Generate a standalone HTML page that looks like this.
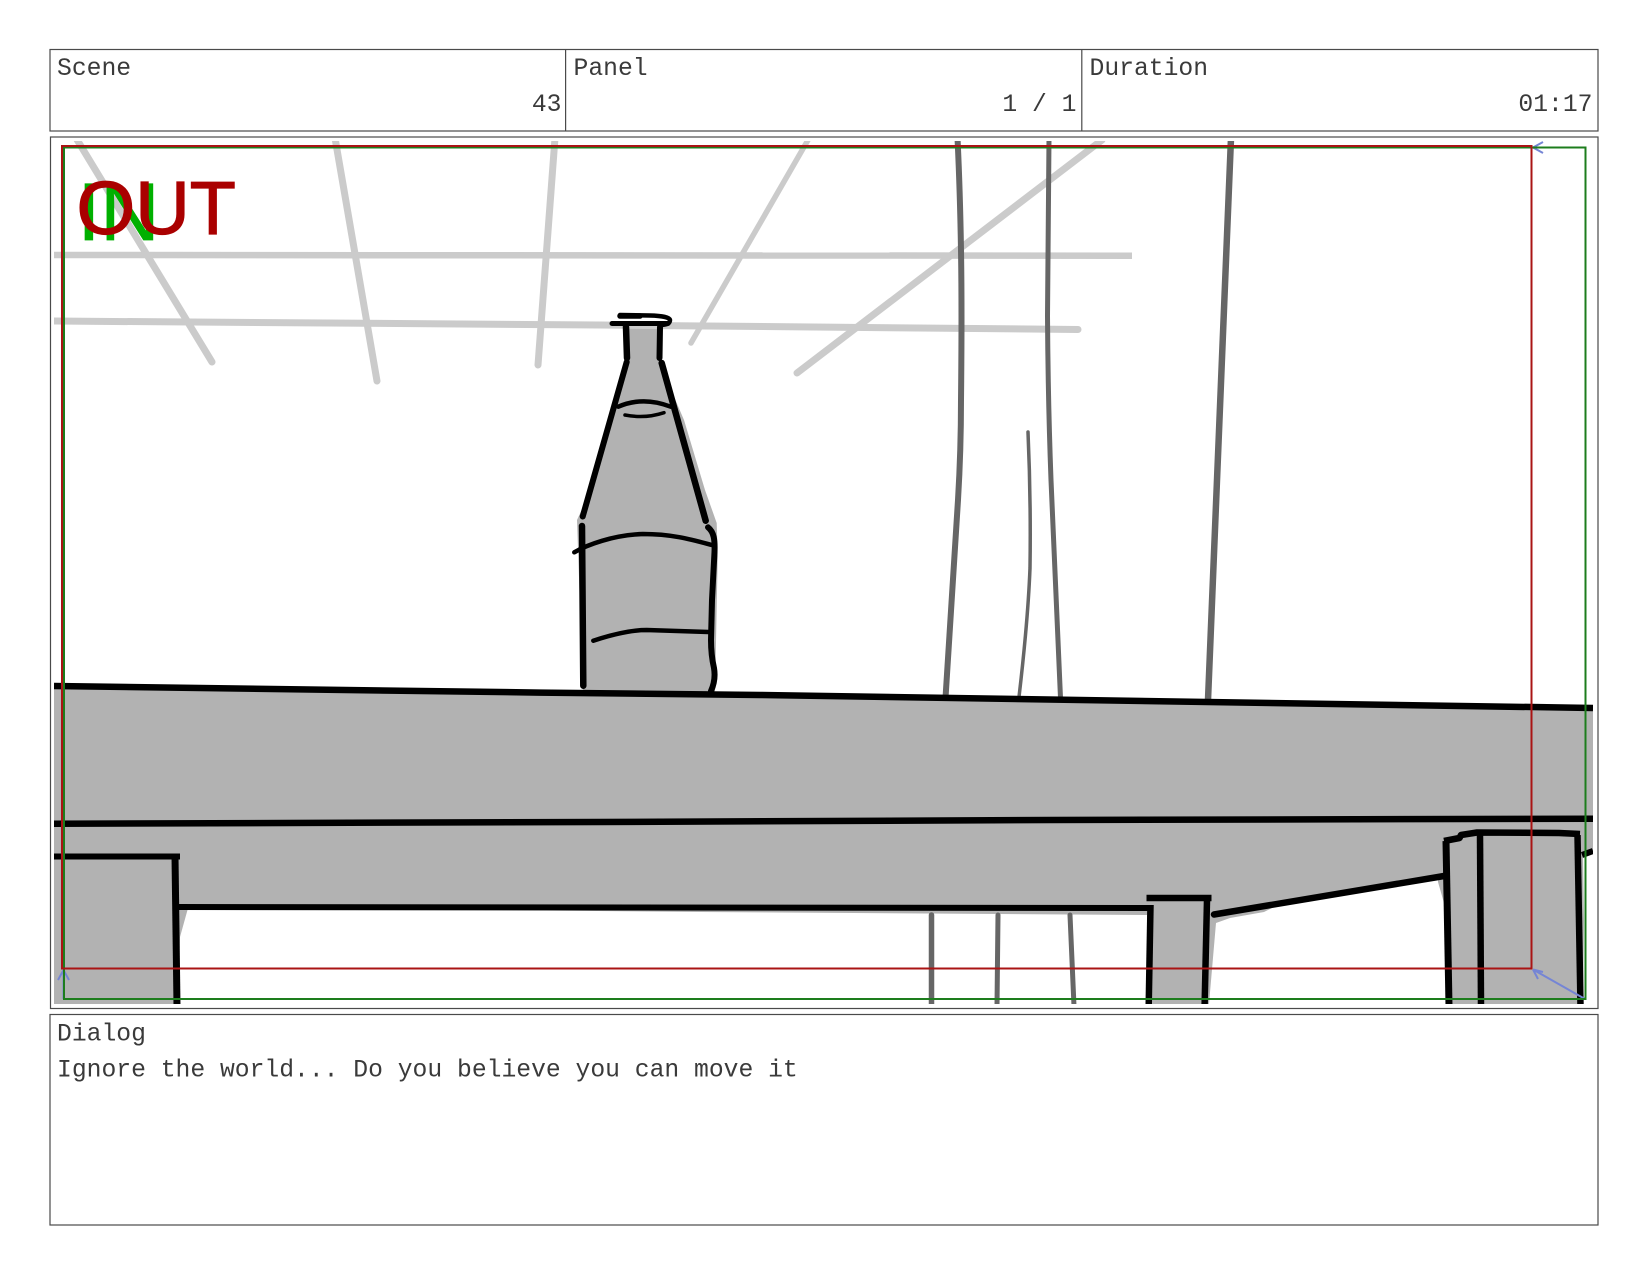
<!DOCTYPE html>
<html lang="en">
<head>
<meta charset="utf-8">
<title>Storyboard</title>
<style>
html,body{margin:0;padding:0;background:#fff;width:1650px;height:1275px;overflow:hidden}
svg{display:block}
.m{font-family:"Liberation Mono",monospace;font-size:24.7px;fill:#3a3a3a}
.e{text-anchor:end}
</style>
</head>
<body>
<svg width="1650" height="1275" viewBox="0 0 1650 1275" xmlns="http://www.w3.org/2000/svg">
<defs><clipPath id="c"><rect x="54" y="141" width="1539" height="863"/></clipPath></defs>

<!-- header -->
<g fill="none" stroke="#4a4a4a" stroke-width="1.2">
<rect x="50" y="49.5" width="1548" height="81.5"/>
<path d="M565.6 49.5V131M1081.8 49.5V131"/>
<rect x="50.5" y="137" width="1547.5" height="871.5"/>
<rect x="50" y="1014.5" width="1548" height="210.5"/>
</g>
<text class="m" x="57" y="75">Scene</text>
<text class="m" x="573.5" y="75">Panel</text>
<text class="m" x="1089.5" y="75">Duration</text>
<text class="m e" x="561.5" y="111">43</text>
<text class="m e" x="1076.5" y="111">1 / 1</text>
<text class="m e" x="1592.5" y="111">01:17</text>
<text class="m" x="57" y="1040.5">Dialog</text>
<text class="m" x="57" y="1076.5">Ignore the world... Do you believe you can move it</text>

<!-- sketch -->
<g clip-path="url(#c)" fill="none" stroke-linecap="round" stroke-linejoin="round">
<!-- grey fills -->
<path fill="#b2b2b2" d="M54 686L1593 708V851L1583 855L1584 920L1583 1004H1449L1444 903L1438 882L1438 877L1280 904L1264 912L1230 918L1216 923L1209 1004H1148L1147 915L700 912L178 907L187.5 910L180 937L178 1004H54Z"/>
<path fill="#b2b2b2" d="M627 325H661L662 362L672 392L684 420L705 490L716.7 523L717.7 557L715 692H583L577 520L581.7 510L626 360Z"/>

<!-- light grey lines -->
<g stroke="#cbcbcb" stroke-width="7">
<path d="M76 138L212 362"/>
<path d="M335 138L377 381"/>
<path d="M555 138L538 365"/>
<path d="M808 140L691 343" stroke-width="5.5"/>
<path d="M1102 140L797 373" stroke-width="7"/>
<path d="M50 255L1132 255.7" stroke-width="6.5" stroke-linecap="butt"/>
<path d="M50 321L600 325L1078 329.5" stroke-width="7"/>
</g>

<!-- dark grey lines -->
<g stroke="#666" stroke-width="6">
<path d="M957.5 138Q960 190 961 250T961 400Q961 450 958 500L945.5 698"/>
<path d="M1049 138L1047.5 316Q1048 400 1051 480L1060.5 698" stroke-width="5"/>
<path d="M1231 138L1208 700" stroke-width="6.5"/>
<path d="M1028 432Q1031 500 1030 568Q1028 620 1019 697" stroke-width="3.5"/>
<path d="M931.5 915V1006" stroke-width="5.5"/>
<path d="M998 915L997 1006" stroke-width="5"/>
<path d="M1070 915L1074 1006" stroke-width="5"/>
</g>

<!-- black lines -->
<g stroke="#000" stroke-linecap="butt">
<path d="M54 686L540 692.6L760 695L1593 708" stroke-width="6.5"/>
<path d="M54 823.7L600 822L1050 820L1593 818.7" stroke-width="6.5"/>
<path d="M54 856.5H180" stroke-width="6"/>
<path d="M175 856L177 1006" stroke-width="7"/>
<path d="M178 907L1149 908" stroke-width="6"/>
<path d="M1146.5 898H1211.5" stroke-width="6.5"/>
<path d="M1150.5 905L1148.7 1006" stroke-width="6.5"/>
<path d="M1207 900L1204.6 1006" stroke-width="6.5"/>
<path d="M1214 914.5L1444 876" stroke-width="6.5" stroke-linecap="round"/>
<path d="M1444 841L1459.5 838L1461 835L1477 832.5L1559 833L1580 834" stroke-width="6.5"/>
<path d="M1446 841L1449 1006" stroke-width="7"/>
<path d="M1480 835L1481 1006" stroke-width="6.5"/>
<path d="M1577.5 835L1580.5 1006" stroke-width="6.5"/>
<path d="M1582 855L1593 851" stroke-width="6"/>

<!-- bottle -->
<g stroke-linecap="round">
<path d="M620 315L650 315.5Q669 316 670 320Q670 325 660 325" stroke-width="4.5"/>
<path d="M620 316H640" stroke-width="5.5"/>
<path d="M612 323.5H668" stroke-width="5"/>
<path d="M626 327L627 358" stroke-width="6.5"/>
<path d="M660 327L659.5 358" stroke-width="6"/>
<path d="M626.7 362L582.7 516.5" stroke-width="6"/>
<path d="M661.7 363L705.7 520.7" stroke-width="6.5"/>
<path d="M582 526L583.3 685.7" stroke-width="6.5"/>
<path d="M708 527.3C714 532 715 540 714.5 552L712 600L711 640Q711 655 714 668Q716 680 711 691" stroke-width="6"/>
<path d="M618.3 406.7Q643 396 670.7 406.7" stroke-width="4.5"/>
<path d="M625 415Q645 419 664 412.7" stroke-width="3.5"/>
<path d="M574.3 552.3C586.7 545 613 535 643 534C673 534 693 540 711.7 545" stroke-width="4.5"/>
<path d="M593.3 640.7C616.7 633 633 630 646.7 630L708.3 632" stroke-width="4.5"/>
</g>
</g>
</g>

<!-- IN / OUT -->
<text x="77.5" y="240" font-family="'Liberation Sans',sans-serif" font-size="82" fill="#00b000" stroke="#00b000" stroke-width="0.8">IN</text>
<text x="76.5" y="234" font-family="'Liberation Sans',sans-serif" font-size="75.5" fill="#aa0000" stroke="#aa0000" stroke-width="1.2">OUT</text>

<!-- guides -->
<g fill="none" stroke="#7585d5" stroke-width="2">
<path d="M1585 999L1533 969.5M1533 969.5L1543 972M1533 969.5L1538 979"/>
<path d="M63.5 999V970M63.5 970L58 980M63.5 970L69 980"/>
<path d="M1585 147.5H1533M1533 147.5L1543 142M1533 147.5L1543 153"/>
</g>
<rect x="64" y="147.5" width="1521.5" height="851.5" fill="none" stroke="#1d7d1d" stroke-width="2"/>
<rect x="62" y="146" width="1469.5" height="822.5" fill="none" stroke="#aa1414" stroke-width="2"/>
</svg>
</body>
</html>
